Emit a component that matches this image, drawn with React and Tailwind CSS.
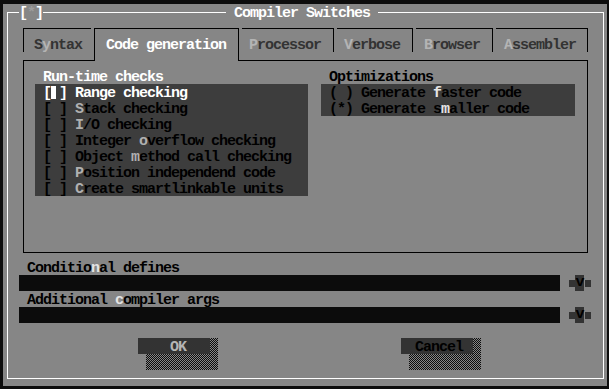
import React from 'react';

const checks = [
  ['', 'S', 'tack checking'],
  ['', 'I', '/O checking'],
  ['Integer ', 'o', 'verflow checking'],
  ['Object ', 'm', 'ethod call checking'],
  ['', 'P', 'osition independend code'],
  ['', 'C', 'reate smartlinkable units'],
];

function Tab({ hot, rest, className }) {
  return (
    <div className={`h-[24px] border-black pt-[7px] ${className}`}>
      <span className="text-[#b4b4b4]">{hot}</span>
      <span className="text-[#333]">{rest}</span>
    </div>
  );
}

function History() {
  return (
    <div className="flex items-center h-[16px]">
      <div className="ml-[9px] w-[6px] h-[7px] bg-[#333]" />
      <div className="w-[9px] h-[16px] bg-[#333] text-black leading-[15px] text-center">v</div>
      <div className="ml-[1px] w-[6px] h-[7px] bg-[#333]" />
    </div>
  );
}

function Button({ label, textClass, pad, className }) {
  return (
    <div className={`relative w-[80px] h-[32px] ${className}`}>
      <div className="absolute left-[8px] top-0 w-[72px] h-[32px] bg-[repeating-conic-gradient(#0c0c0c_0_25%,#868686_0_50%)] bg-[length:2px_2px]" />
      <div className={`relative w-[72px] h-[16px] bg-[#333] ${pad} ${textClass}`}>{label}</div>
    </div>
  );
}

export default function App() {
  return (
    <div className="w-[609px] h-[389px] overflow-hidden bg-[#0c0c0c] pl-[3px] pt-[4px] font-['Liberation_Mono',monospace] font-bold text-[15px] leading-[20px] tracking-[-1px] text-black whitespace-pre">
      <div className="w-[604px] h-[382px] bg-[#868686] pt-[8px] pl-[4px]">
        <div className="w-[597px] h-[367px] border border-white">
          {/* title */}
          <div className="-mt-[9px] h-[16px] flex">
            <span className="ml-[11px] h-[16px] bg-[#868686] text-white">[<span className="text-[#9c9c9c]">*</span>]</span>
            <span className="ml-[183px] h-[16px] bg-[#868686] text-white"> Compiler Switches </span>
          </div>

          <div className="ml-[15px] w-[565px]">
            {/* tabs */}
            <div className="flex items-start mt-[8px] h-[33px]">
              <div className="w-[68px] h-[24px] border-l border-t border-black pt-[7px] pl-[10px]">
                <span className="text-[#333]">S</span>
                <span className="text-[#b4b4b4]">y</span>
                <span className="text-[#333]">ntax</span>
              </div>
              <div className="relative z-10 ml-[3px] w-[145px] h-[33px] border-l border-t border-r border-black bg-[#868686] pt-[7px] pl-[11px] text-white">
                Code generation
              </div>
              <Tab hot="P" rest="rocessor" className="ml-[3px] w-[92px] border-t border-r pl-[7px]" />
              <Tab hot="V" rest="erbose" className="ml-[3px] w-[76px] border-t border-r pl-[7px]" />
              <Tab hot="B" rest="rowser" className="ml-[3px] w-[77px] border-t border-r pl-[8px]" />
              <Tab hot="A" rest="ssembler" className="ml-[3px] w-[92px] border-t border-r pl-[8px]" />
            </div>

            {/* panel */}
            <div className="-mt-[1px] w-[565px] h-[193px] border border-black pt-[7px] flex items-start">
              <div className="ml-[11px] w-[273px]">
                <div className="pl-[8px] h-[16px] text-white">Run-time checks</div>
                <div className="bg-[#3d3d3d] pl-[8px]">
                  <div className="h-[16px] text-white flex items-start">
                    <span>[</span>
                    <span className="inline-block w-[8px] h-[16px] pt-[2px]">
                      <span className="block w-[5px] h-[13px] bg-white" />
                    </span>
                    <span>] Range checking</span>
                  </div>
                  {checks.map(([pre, hot, rest], i) => (
                    <div key={i} className="h-[16px]">
                      {'[ ] ' + pre}
                      <span className="text-[#b0b0b0]">{hot}</span>
                      {rest}
                    </div>
                  ))}
                </div>
              </div>
              <div className="ml-[13px] w-[254px]">
                <div className="pl-[8px] h-[16px]">Optimizations</div>
                <div className="bg-[#3d3d3d] pl-[8px]">
                  <div className="h-[16px]">
                    {'( ) Generate '}
                    <span className="text-[#e4e4e4]">f</span>
                    aster code
                  </div>
                  <div className="h-[16px]">
                    {'(*) Generate s'}
                    <span className="text-[#e4e4e4]">m</span>
                    aller code
                  </div>
                </div>
              </div>
            </div>
          </div>

          {/* inputs */}
          <div className="mt-[6px] pl-[19px] h-[16px]">
            Conditio<span className="text-[#e4e4e4]">n</span>al defines
          </div>
          <div className="flex items-center h-[16px] ml-[11px]">
            <div className="w-[541px] h-[16px] bg-[#0c0c0c]" />
            <History />
          </div>
          <div className="pl-[19px] h-[16px]">
            Additional <span className="text-[#e4e4e4]">c</span>ompiler args
          </div>
          <div className="flex items-center h-[16px] ml-[11px]">
            <div className="w-[541px] h-[16px] bg-[#0c0c0c]" />
            <History />
          </div>

          {/* buttons */}
          <div className="mt-[15px] flex">
            <Button label="OK" textClass="text-[#b4b4b4]" pad="pl-[32px]" className="ml-[130px]" />
            <Button label="Cancel" textClass="text-black" pad="pl-[14px]" className="ml-[183px]" />
          </div>
        </div>
      </div>
    </div>
  );
}
